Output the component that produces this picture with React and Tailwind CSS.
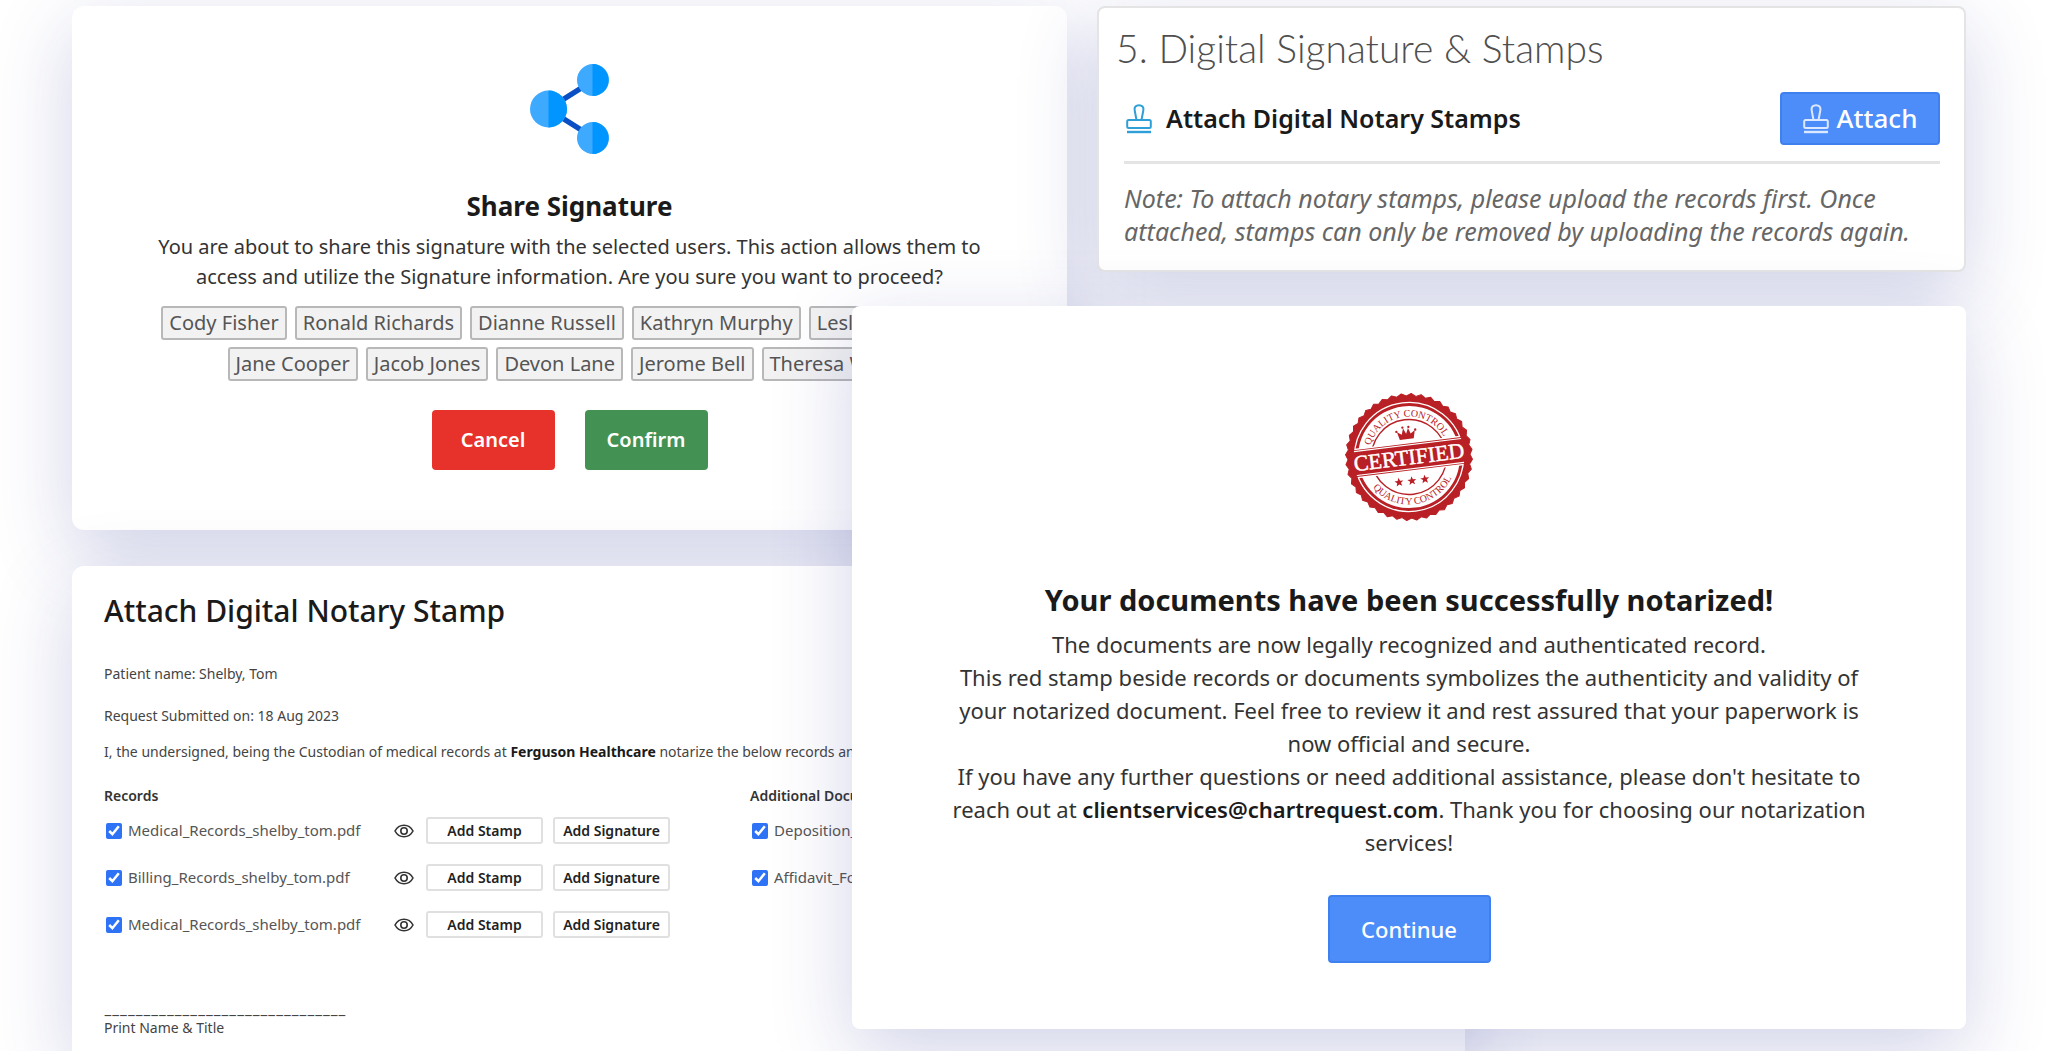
const users = [
  ['Cody Fisher', 'Ronald Richards', 'Dianne Russell', 'Kathryn Murphy', 'Leslie Alexander'],
  ['Jane Cooper', 'Jacob Jones', 'Devon Lane', 'Jerome Bell', 'Theresa Webb'],
];

const records = [
  { id: 'record-1', name: 'Medical_Records_shelby_tom.pdf' },
  { id: 'record-2', name: 'Billing_Records_shelby_tom.pdf' },
  { id: 'record-3', name: 'Medical_Records_shelby_tom.pdf' },
];

const documents = [
  { id: 'document-1', name: 'Deposition_shelby_tom.pdf' },
  { id: 'document-2', name: 'Affidavit_Form_shelby.pdf' },
];

const ShareIcon = () => (
  <svg viewBox="0 0 80 92" className="w-20 h-[92px]" aria-hidden="true">
    <path d="M18 46 64 17M18 46l46 29" stroke="#0a4fc4" strokeWidth="5.500" />
    <circle cx="18.500" cy="46" r="18.500" fill="#3da9ff" />
    <path d="M18.500 27.500a18.500 18.500 0 0 1 0 37z" fill="#0095ff" />
    <circle cx="63" cy="17" r="16" fill="#3da9ff" />
    <path d="M62.500 1a16 16 0 0 1 0 32z" fill="#0095ff" />
    <circle cx="63" cy="75" r="16" fill="#3da9ff" />
    <path d="M62.500 59a16 16 0 0 1 0 32z" fill="#0095ff" />
  </svg>
);

const StampIcon = ({ className }) => (
  <svg viewBox="0 0 26 30" className={className} fill="none" stroke="currentColor" strokeWidth="2" strokeLinejoin="round" aria-hidden="true">
    <path d="M10.500 16 8.700 6.500C8 3 10 1.200 13 1.200s5 1.800 4.300 5.300L15.500 16" />
    <rect x="1.200" y="16" width="23.600" height="8" rx="1.500" />
    <path d="M1 28h24" strokeWidth="2.400" />
  </svg>
);

const EyeIcon = () => (
  <svg viewBox="0 0 20 14" className="w-5 h-3.5" fill="none" stroke="#333" strokeWidth="1.600" aria-hidden="true">
    <path d="M1 7c2-3.800 5.200-5.800 9-5.800S17 3.200 19 7c-2 3.800-5.200 5.800-9 5.800S3 10.800 1 7z" />
    <circle cx="10" cy="7" r="3.200" />
  </svg>
);

// scalloped rim of the seal
const rim = Array.from({ length: 80 }, (_, i) => {
  const angle = (i * Math.PI) / 40;
  const radius = i % 2 ? 61 : 63.5;
  return `${(radius * Math.cos(angle)).toFixed(2)},${(radius * Math.sin(angle)).toFixed(2)}`;
}).join(' ');

const star = 'M0-4.600 1.200-1.500 4.500-1.400 1.900.6 2.800 3.800 0 2-2.800 3.800-1.900.6-4.500-1.400-1.200-1.500z';

const CertifiedSeal = () => (
  <svg viewBox="-65 -65 130 130" className="size-[130px]" fill="#b92025" role="img" aria-label="Certified seal">
    <defs>
      <path id="seal-top" d="M-40.500 0A40.500 40.500 0 0 1 40.500 0" />
      <path id="seal-bottom" d="M-47.500 0A47.500 47.500 0 0 0 47.500 0" />
    </defs>
    <g transform="rotate(-7)">
      <polygon points={rim} stroke="#b92025" strokeWidth="1" strokeLinejoin="round" />
      <circle r="54.500" fill="none" stroke="#fff" strokeWidth="1.300" />
      <circle r="51" fill="#fff" />
      <circle r="37.500" fill="none" stroke="#b92025" strokeWidth="1.400" />
      <path d="M-53-14.800H53V14.800H-53z" fill="#fff" />
      <path d="M-56-13.500H56V13.500H-56z" />
      <path d="M-54-12H54M-54 12H54" stroke="#fff" strokeWidth="1.200" />
      <path d="M-7-18h14l2-8-4.500 3-2-6L0-23.500-2.500-29l-2 6-4.500-3z" />
      <circle cx="-9.500" cy="-26.500" r="1.200" />
      <circle cx="-3" cy="-30" r="1.200" />
      <circle cx="3" cy="-30" r="1.200" />
      <circle cx="9.500" cy="-26.500" r="1.200" />
      <path d={star} transform="translate(-13 24)" />
      <path d={star} transform="translate(0 24)" />
      <path d={star} transform="translate(13 24)" />
      <text y="7.500" textAnchor="middle" fill="#fff" stroke="#fff" strokeWidth="0.500" className="font-['Liberation_Serif',serif] text-[22px]">CERTIFIED</text>
      <text textAnchor="middle" className="font-['Liberation_Serif',serif] text-[10px]"><textPath href="#seal-top" startOffset="50%">QUALITY CONTROL</textPath></text>
      <text textAnchor="middle" className="font-['Liberation_Serif',serif] text-[10px]"><textPath href="#seal-bottom" startOffset="50%">QUALITY CONTROL</textPath></text>
    </g>
  </svg>
);

const ShareSignature = () => (
  <section className="w-5/7 flex flex-col items-center rounded-xl bg-white pt-[57px] pb-15 text-center shadow-[0_24px_80px_rgba(55,65,155,0.23)]">
    <ShareIcon />
    <h2 className="mt-[33px] text-[26px] leading-9 font-bold">Share Signature</h2>
    <p className="mt-2 text-xl leading-[30px] text-[#333]">
      You are about to share this signature with the selected users. This action allows them to
      <br />
      access and utilize the Signature information. Are you sure you want to proceed?
    </p>
    <div className="mt-3.5 flex flex-col gap-[7px]">
      {users.map((row) => (
        <ul key={row[0]} className="flex justify-center gap-2">
          {row.map((name) => (
            <li key={name} className="h-[34px] rounded-[3px] border-2 border-[#b8b8b8] bg-[#f2f2f2] px-1.5 text-xl leading-[30px] text-[#555] whitespace-nowrap">{name}</li>
          ))}
        </ul>
      ))}
    </div>
    <div className="mt-[29px] flex gap-[30px]">
      <button type="button" className="h-15 w-[123px] rounded-[4px] bg-[#e7312b] text-xl font-semibold text-white">Cancel</button>
      <button type="button" className="h-15 w-[123px] rounded-[4px] bg-[#439254] text-xl font-semibold text-white">Confirm</button>
    </div>
  </section>
);

const FileLabel = ({ file }) => (
  <label htmlFor={file.id} className="flex w-72 items-center gap-1.5 text-[15px] text-[#555]">
    <input id={file.id} type="checkbox" defaultChecked className="size-4 accent-[#2e72f6]" />
    {file.name}
  </label>
);

const AttachStamp = () => (
  <section className="flex-1 rounded-t-xl bg-white pt-6 pr-8 pb-2.5 pl-8 shadow-[0_24px_80px_rgba(55,65,155,0.23)]">
    <h2 className="text-3xl leading-[42px] font-medium">Attach Digital Notary Stamp</h2>
    <div className="text-sm leading-5 text-[#444]">
      <p className="mt-8">Patient name: Shelby, Tom</p>
      <p className="mt-[22px]">Request Submitted on: 18 Aug 2023</p>
      <p className="mt-4 whitespace-nowrap">
        I, the undersigned, being the Custodian of medical records at <strong className="font-bold text-[#1a1a1a]">Ferguson Healthcare</strong> notarize the below records and further certify them
      </p>
    </div>
    <div className="mt-6 flex gap-20">
      <div className="w-[566px]">
        <h3 className="text-sm leading-5 font-semibold text-[#333]">Records</h3>
        <ul className="mt-[11px] flex flex-col gap-5 pl-0.5">
          {records.map((file) => (
            <li key={file.id} className="flex items-center">
              <FileLabel file={file} />
              <button type="button" aria-label="Preview"><EyeIcon /></button>
              <button type="button" className="ml-3 h-[27px] w-[117px] rounded-[3px] border-2 border-[#e0e0e0] text-sm leading-5 font-semibold text-[#222]">Add Stamp</button>
              <button type="button" className="ml-2.5 h-[27px] w-[117px] rounded-[3px] border-2 border-[#e0e0e0] text-sm leading-5 font-semibold text-[#222]">Add Signature</button>
            </li>
          ))}
        </ul>
      </div>
      <div>
        <h3 className="text-sm leading-5 font-semibold text-[#333]">Additional Documents</h3>
        <ul className="mt-[11px] flex flex-col gap-5 pl-0.5">
          {documents.map((file) => (
            <li key={file.id} className="flex h-[27px] items-center"><FileLabel file={file} /></li>
          ))}
        </ul>
      </div>
    </div>
    <p className="mt-15 font-['Lato',sans-serif] text-[17px] leading-5 text-[#444]">_______________________________</p>
    <p className="text-sm leading-5 text-[#444]">Print Name &amp; Title</p>
  </section>
);

const DigitalSignature = () => (
  <section className="w-[78%] self-end rounded-lg border-2 border-[#e4e4e4] bg-white pt-[18px] pr-6 pb-[22px] pl-[25px] shadow-[0_24px_80px_rgba(55,65,155,0.23)]">
    <h2 className="-ml-2 font-['Lato',sans-serif] text-[39px] leading-[44px] font-light text-[#4f4f4f]">5. Digital Signature &amp; Stamps</h2>
    <div className="mt-[22px] flex items-center justify-between border-b-3 border-[#e4e4e4] pb-4">
      <p className="flex items-center gap-3.5 pl-0.5 text-[25px] font-semibold">
        <StampIcon className="h-[30px] w-[26px] text-[#2f9fd8]" />
        Attach Digital Notary Stamps
      </p>
      <button type="button" className="flex h-[53px] w-40 items-center justify-center gap-2 rounded-[4px] border-2 border-[#3f80ef] bg-[#4c8df9] text-[26px] font-medium text-white">
        <StampIcon className="h-[30px] w-[26px] text-[#dce8ff]" />
        Attach
      </button>
    </div>
    <p className="mt-[18px] text-[25px] leading-[33px] whitespace-nowrap text-[#666] italic">
      Note: To attach notary stamps, please upload the records first. Once
      <br />
      attached, stamps can only be removed by uploading the records again.
    </p>
  </section>
);

const NotarizedDialog = () => (
  <section role="dialog" aria-label="Documents notarized" className="flex flex-col items-center rounded-lg bg-white pt-[86px] pb-[66px] text-center shadow-[0_24px_80px_rgba(55,65,155,0.23)]">
    <CertifiedSeal />
    <h2 className="mt-[58px] text-[29px] leading-10 font-bold">Your documents have been successfully notarized!</h2>
    <p className="mt-2 text-[22px] leading-[33px] whitespace-nowrap text-[#333]">
      The documents are now legally recognized and authenticated record.
      <br />
      This red stamp beside records or documents symbolizes the authenticity and validity of
      <br />
      your notarized document. Feel free to review it and rest assured that your paperwork is
      <br />
      now official and secure.
      <br />
      If you have any further questions or need additional assistance, please don't hesitate to
      <br />
      reach out at <a href="mailto:clientservices@chartrequest.com" className="font-semibold text-[#1a1a1a]">clientservices@chartrequest.com</a>. Thank you for choosing our notarization
      <br />
      services!
    </p>
    <button type="button" className="mt-9 h-[68px] w-[163px] rounded-[4px] border-2 border-[#3f80ef] bg-[#4c8df9] text-[22px] font-medium text-white">Continue</button>
  </section>
);

export default function App() {
  return (
    <main className="grid min-h-screen grid-cols-[780fr_613fr_501fr] overflow-hidden bg-white pt-1.5 pr-[82px] pl-[72px] font-['Noto_Sans',sans-serif] text-[#1a1a1a]">
      <div className="col-start-1 col-end-3 row-start-1 flex min-w-0 flex-col gap-9">
        <ShareSignature />
        <AttachStamp />
      </div>
      <div className="col-start-2 col-end-4 row-start-1 flex min-w-0 flex-col gap-[34px] self-start">
        <DigitalSignature />
        <NotarizedDialog />
      </div>
    </main>
  );
}
